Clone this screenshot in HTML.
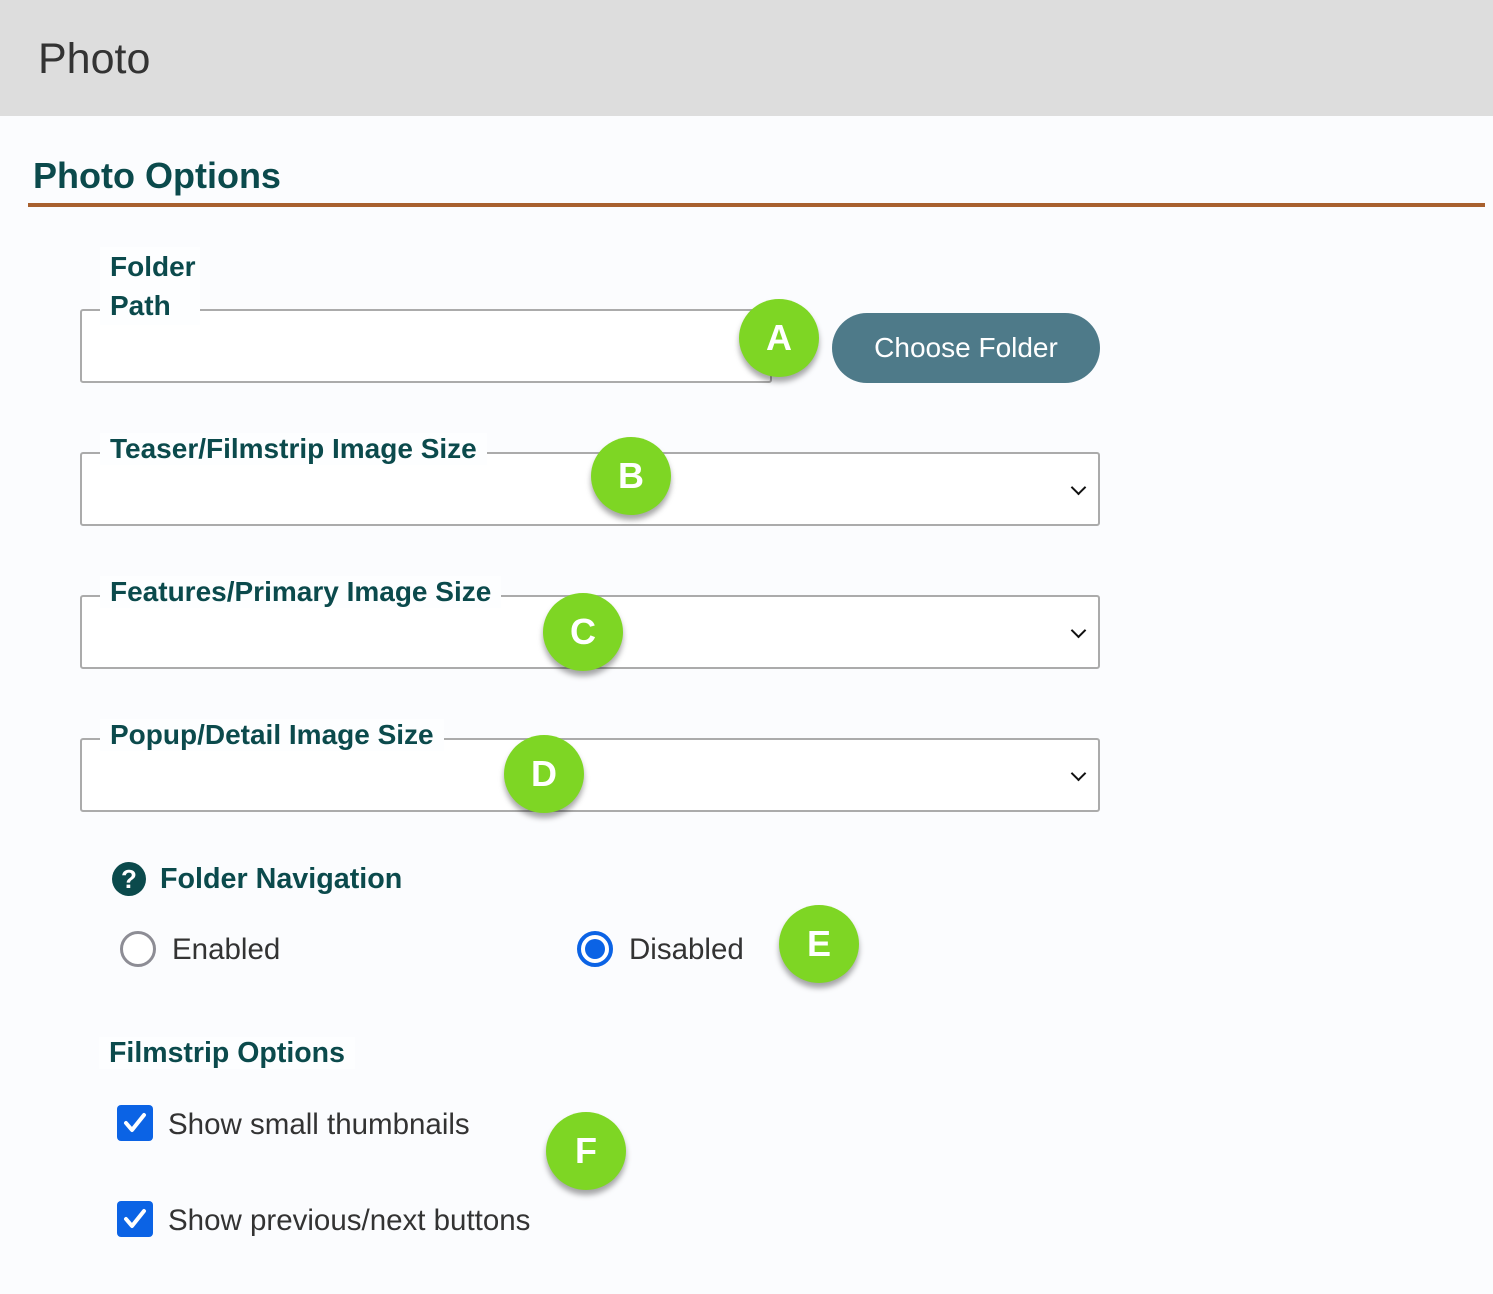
<!DOCTYPE html>
<html><head><meta charset="utf-8"><style>
*{margin:0;padding:0;box-sizing:border-box}
body{width:1493px;height:1294px;background:#fbfcfe;font-family:"Liberation Sans",sans-serif;position:relative;overflow:hidden}
.a{position:absolute;white-space:nowrap}
.hdr{left:0;top:0;width:1493px;height:116px;background:#dddddd}
.lg{color:#0b4a4c;font-weight:bold;font-size:28px;background:#fdfeff;padding:0 10px;line-height:32px}
.box{border:2px solid #ababab;border-radius:3px;background:#fff}
.bd{width:80px;height:78px;border-radius:50%;background:#7ed624;color:#fff;font-weight:bold;font-size:36px;text-align:center;line-height:78px;box-shadow:0 5px 6px rgba(0,0,0,.35)}
.chev{width:11px;height:11px;border-right:2.5px solid #111;border-bottom:2.5px solid #111;transform:rotate(45deg)}
.t{font-size:29.5px;color:#333;line-height:34px}
.cb{width:36px;height:36px;background:#0b63e5;border-radius:4px}
</style></head><body>
<div class="a hdr"></div>
<div class="a" style="left:38px;top:34px;font-size:43px;color:#333;line-height:50px">Photo</div>
<div class="a" style="left:33px;top:154px;font-size:36px;font-weight:bold;color:#0b4a4c;line-height:44px">Photo Options</div>
<div class="a" style="left:28px;top:203px;width:1457px;height:4px;background:#a8602e"></div>

<div class="a box" style="left:80px;top:309px;width:692px;height:74px"></div>
<div class="a lg" style="left:100px;top:247px;line-height:39px;white-space:normal;width:100px">Folder Path</div>
<div class="a" style="left:832px;top:313px;width:268px;height:70px;border-radius:35px;background:#4e7a89;color:#fff;font-size:28px;text-align:center;line-height:70px">Choose Folder</div>

<div class="a box" style="left:80px;top:452px;width:1020px;height:74px"></div>
<div class="a lg" style="left:100px;top:433px">Teaser/Filmstrip Image Size</div>
<div class="a chev" style="left:1073px;top:482px"></div>

<div class="a box" style="left:80px;top:595px;width:1020px;height:74px"></div>
<div class="a lg" style="left:100px;top:576px">Features/Primary Image Size</div>
<div class="a chev" style="left:1073px;top:625px"></div>

<div class="a box" style="left:80px;top:738px;width:1020px;height:74px"></div>
<div class="a lg" style="left:100px;top:719px">Popup/Detail Image Size</div>
<div class="a chev" style="left:1073px;top:768px"></div>

<div class="a" style="left:112px;top:862px;width:34px;height:34px;border-radius:50%;background:#0b4a4c;color:#fff;font-weight:bold;font-size:26px;text-align:center;line-height:34px">?</div>
<div class="a lg" style="left:150px;top:863px;background:none;font-size:28.7px">Folder Navigation</div>

<div class="a" style="left:120px;top:931px;width:36px;height:36px;border-radius:50%;border:3px solid #8d8d95;background:#fff"></div>
<div class="a t" style="left:172px;top:933px">Enabled</div>
<div class="a" style="left:577px;top:931px;width:36px;height:36px;border-radius:50%;border:4px solid #0b63e5;background:#fff"></div>
<div class="a" style="left:585px;top:939px;width:20px;height:20px;border-radius:50%;background:#0b63e5"></div>
<div class="a t" style="left:629px;top:933px">Disabled</div>

<div class="a lg" style="left:99px;top:1037px;font-size:28.5px">Filmstrip Options</div>

<div class="a cb" style="left:117px;top:1105px"></div>
<svg class="a" style="left:117px;top:1105px" width="36" height="36"><path d="M9 18 L15 25 L27 10" stroke="#fff" stroke-width="4" fill="none" stroke-linecap="round" stroke-linejoin="round"/></svg>
<div class="a t" style="left:168px;top:1108px">Show small thumbnails</div>
<div class="a cb" style="left:117px;top:1201px"></div>
<svg class="a" style="left:117px;top:1201px" width="36" height="36"><path d="M9 18 L15 25 L27 10" stroke="#fff" stroke-width="4" fill="none" stroke-linecap="round" stroke-linejoin="round"/></svg>
<div class="a t" style="left:168px;top:1204px">Show previous/next buttons</div>

<div class="a bd" style="left:739px;top:299px">A</div>
<div class="a bd" style="left:591px;top:437px">B</div>
<div class="a bd" style="left:543px;top:593px">C</div>
<div class="a bd" style="left:504px;top:735px">D</div>
<div class="a bd" style="left:779px;top:905px">E</div>
<div class="a bd" style="left:546px;top:1112px">F</div>
</body></html>
